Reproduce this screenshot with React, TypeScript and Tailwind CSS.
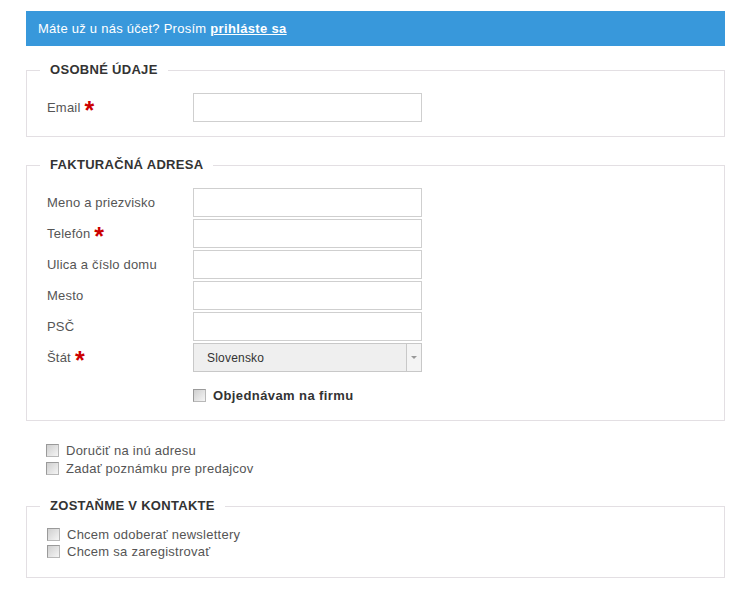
import React from "react";

const font = { fontFamily: '"Liberation Sans", Arial, sans-serif' };

function Box() {
  return (
    <span className="inline-block w-[13px] h-[13px] border border-[#9a9a9a] border-b-[#b8b8b8] border-r-[#b8b8b8] bg-gradient-to-br from-[#cfcfcf] to-[#f5f5f5] shrink-0" />
  );
}

function Star() {
  return <span className="text-[#cc0000] font-bold text-[25px] leading-none ml-[4px] relative top-[3px]">*</span>;
}

function Row({ label, req, children }: { label: string; req?: boolean; children?: React.ReactNode }) {
  return (
    <div className="flex items-center h-[29px]">
      <div className="w-[153px] h-[29px] pl-[7px] text-[13px] text-[#555] tracking-[0.2px] flex items-center">
        {label}
        {req && <Star />}
      </div>
      {children ?? <div className="w-[229px] h-[29px] border border-[#cfcfcf] bg-white" />}
    </div>
  );
}

function Legend({ children }: { children: React.ReactNode }) {
  return (
    <legend className="px-[10px] text-[13px] font-bold uppercase tracking-[0.3px] text-[#333] leading-[16px]">
      {children}
    </legend>
  );
}

function Check({ label, bold }: { label: string; bold?: boolean }) {
  return (
    <div className="flex items-center gap-[7px] h-[17px]">
      <Box />
      <span className={bold ? "text-[13px] font-bold text-[#333] tracking-[0.4px]" : "text-[13px] text-[#555] tracking-[0.25px]"}>{label}</span>
    </div>
  );
}

export default function App() {
  return (
    <div style={font} className="bg-white w-[750px] h-[589px] pl-[26px] pr-[25px] pt-[11px]">
      <div className="h-[35px] bg-[#3898db] flex items-center px-[12px] text-[13px] text-white tracking-[0.25px]">
        Máte už u nás účet? Prosím&nbsp;<span className="font-bold underline tracking-[0.35px]">prihláste sa</span>
      </div>

      <fieldset className="mt-[16px] border border-[#e3dfe3] px-[13px] pb-[14px]">
        <Legend>Osobné údaje</Legend>
        <div className="mt-[15px]">
          <Row label="Email" req />
        </div>
      </fieldset>

      <fieldset className="mt-[20px] border border-[#e3dfe3] px-[13px] pb-[16px]">
        <Legend>Fakturačná adresa</Legend>
        <div className="mt-[15px] flex flex-col gap-[2px]">
          <Row label="Meno a priezvisko" />
          <Row label="Telefón" req />
          <Row label="Ulica a číslo domu" />
          <Row label="Mesto" />
          <Row label="PSČ" />
          <Row label="Štát" req>
            <div className="w-[229px] h-[29px] border border-[#c8c8c8] bg-[#efefef] flex items-center">
              <span className="flex-1 pl-[13px] text-[12px] text-[#333] tracking-[0.2px]">Slovensko</span>
              <span className="w-[15px] h-full border-l border-[#c8c8c8] bg-[#f4f4f4] flex items-center justify-center">
                <span className="block w-0 h-0 border-l-[3px] border-r-[3px] border-t-[3px] border-l-transparent border-r-transparent border-t-[#999]" />
              </span>
            </div>
          </Row>
          <div className="pl-[153px] mt-[13px]">
            <Check label="Objednávam na firmu" bold />
          </div>
        </div>
      </fieldset>

      <div className="mt-[21px] pl-[20px] flex flex-col gap-[1px]">
        <Check label="Doručiť na inú adresu" />
        <Check label="Zadať poznámku pre predajcov" />
      </div>

      <fieldset className="mt-[21px] border border-[#e3dfe3] px-[13px] pb-[17px]">
        <Legend>Zostaňme v kontakte</Legend>
        <div className="mt-[12px] pl-[7px] flex flex-col">
          <Check label="Chcem odoberať newslettery" />
          <Check label="Chcem sa zaregistrovať" />
        </div>
      </fieldset>
    </div>
  );
}
